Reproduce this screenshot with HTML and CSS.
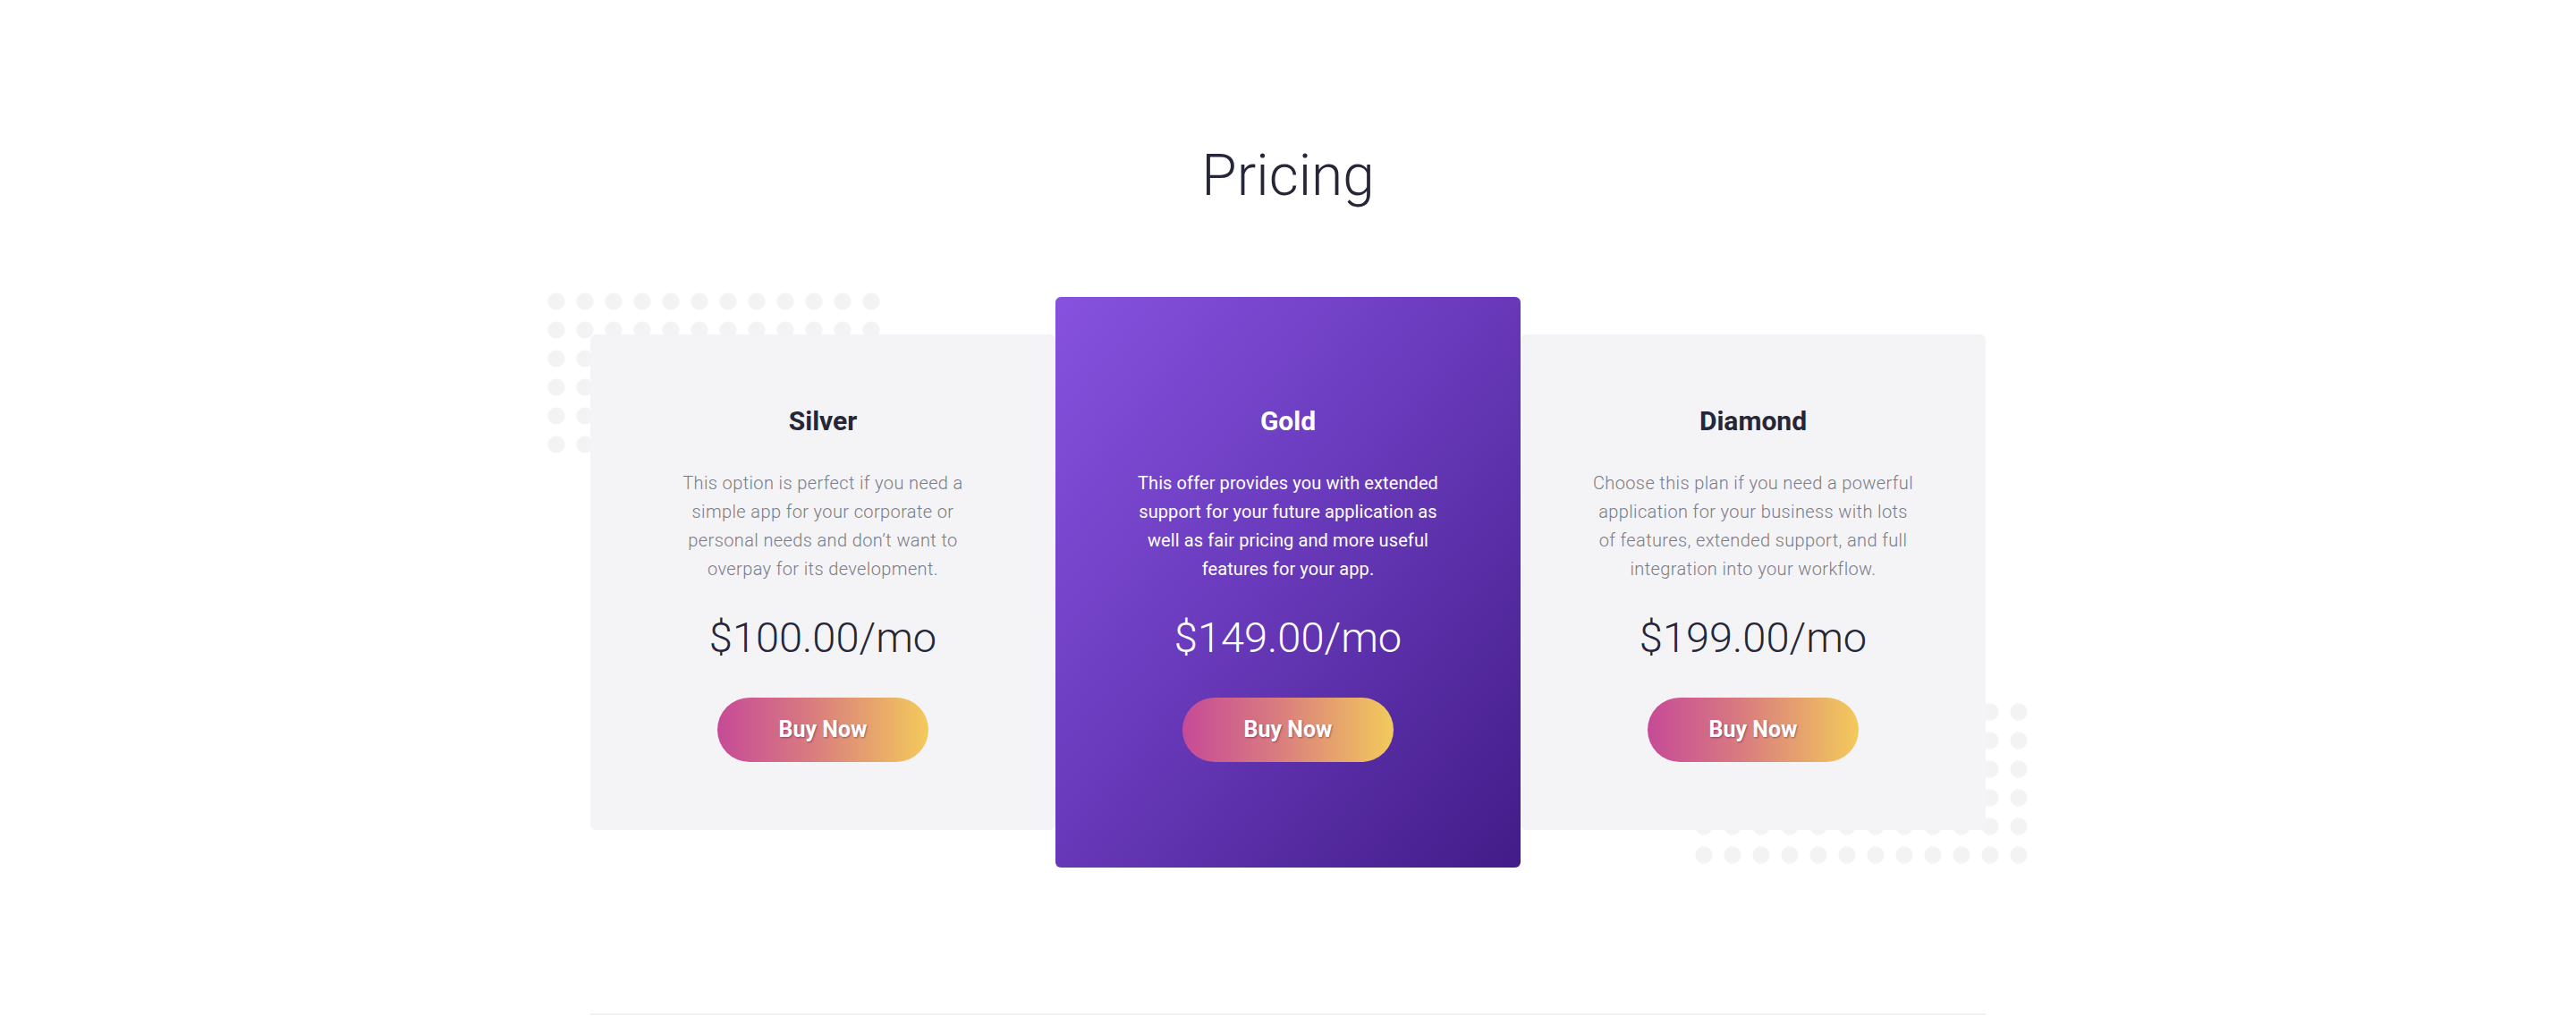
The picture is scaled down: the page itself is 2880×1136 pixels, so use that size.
FILE: index.html
```html
<!DOCTYPE html>
<html lang="en">
<head>
<meta charset="utf-8">
<title>Pricing</title>
<link rel="stylesheet" href="styles.css">
</head>
<body>
<section class="pricing">
  <h1 class="pricing-title">Pricing</h1>
  <div class="plans">
    <div class="dots dots-tl"></div>
    <div class="dots dots-br"></div>
    <div class="plan">
      <h2 class="plan-name">Silver</h2>
      <p class="plan-desc">This option is perfect if you need a simple app for your corporate or personal needs and don’t want to overpay for its development.</p>
      <div class="plan-price">$100.00/mo</div>
      <a class="buy-btn" href="#">Buy Now</a>
    </div>
    <div class="plan plan-featured">
      <h2 class="plan-name">Gold</h2>
      <p class="plan-desc">This offer provides you with extended support for your future application as well as fair pricing and more useful features for your app.</p>
      <div class="plan-price">$149.00/mo</div>
      <a class="buy-btn" href="#">Buy Now</a>
    </div>
    <div class="plan">
      <h2 class="plan-name">Diamond</h2>
      <p class="plan-desc">Choose this plan if you need a powerful application for your business with lots of features, extended support, and full integration into your workflow.</p>
      <div class="plan-price">$199.00/mo</div>
      <a class="buy-btn" href="#">Buy Now</a>
    </div>
  </div>
  <div class="divider"></div>
</section>
</body>
</html>
```

FILE: styles.css
```css
* { box-sizing: border-box; }

html, body {
  margin: 0;
  padding: 0;
  background: #ffffff;
}

body {
  font-family: Roboto, "Liberation Sans", Arial, sans-serif;
  color: #262639;
}

.pricing {
  padding-top: 158px;
}

.pricing-title {
  margin: 0;
  text-align: center;
  font-size: 64px;
  line-height: 77px;
  font-weight: 300;
  color: #262639;
}

.plans {
  position: relative;
  width: 1560px;
  margin: 97px auto 0;
  display: flex;
  align-items: center;
}

.dots {
  position: absolute;
  width: 384px;
  height: 192px;
  background-image: radial-gradient(circle, #f3f3f5 9px, rgba(243, 243, 245, 0) 10px);
  background-size: 32px 32px;
  z-index: 0;
}

.dots-tl {
  left: -54px;
  top: -11px;
}

.dots-br {
  right: -53px;
  bottom: -2px;
}

.plan {
  position: relative;
  z-index: 1;
  flex: 0 0 520px;
  background: #f4f4f6;
  border-radius: 6px;
  padding: 79px 0 76px;
  text-align: center;
  display: flex;
  flex-direction: column;
  align-items: center;
}

.plan-featured {
  z-index: 2;
  padding: 121px 0 118px;
  background: linear-gradient(to bottom right, #8652df 0%, #6a3bbd 45%, #431c88 100%);
  color: #ffffff;
}

.plan-name {
  margin: 0;
  font-size: 30px;
  line-height: 36px;
  font-weight: 700;
  color: #262639;
}

.plan-desc {
  margin: 35px 0 0;
  width: 364px;
  font-size: 20px;
  line-height: 32px;
  font-weight: 300;
  letter-spacing: 0.38px;
  color: #7b7b87;
}

.plan-price {
  margin-top: 33px;
  font-size: 47px;
  line-height: 55px;
  font-weight: 300;
  color: #262639;
}

.plan-featured .plan-name,
.plan-featured .plan-price {
  color: #ffffff;
}

.plan-featured .plan-desc {
  color: #ffffff;
  font-weight: 400;
  letter-spacing: 0.1px;
}

.buy-btn {
  margin-top: 40px;
  width: 236px;
  height: 72px;
  border-radius: 36px;
  background: linear-gradient(to right, #c64a97 0%, #d97c7f 45%, #f3ca5b 100%);
  color: #ffffff;
  font-size: 25px;
  font-weight: 700;
  line-height: 72px;
  text-decoration: none;
  text-shadow: 1px 1px 2px rgba(60, 20, 60, 0.45);
}

.divider {
  width: 1560px;
  margin: 163px auto 0;
  height: 2px;
  background: #f1f1f3;
}
```
